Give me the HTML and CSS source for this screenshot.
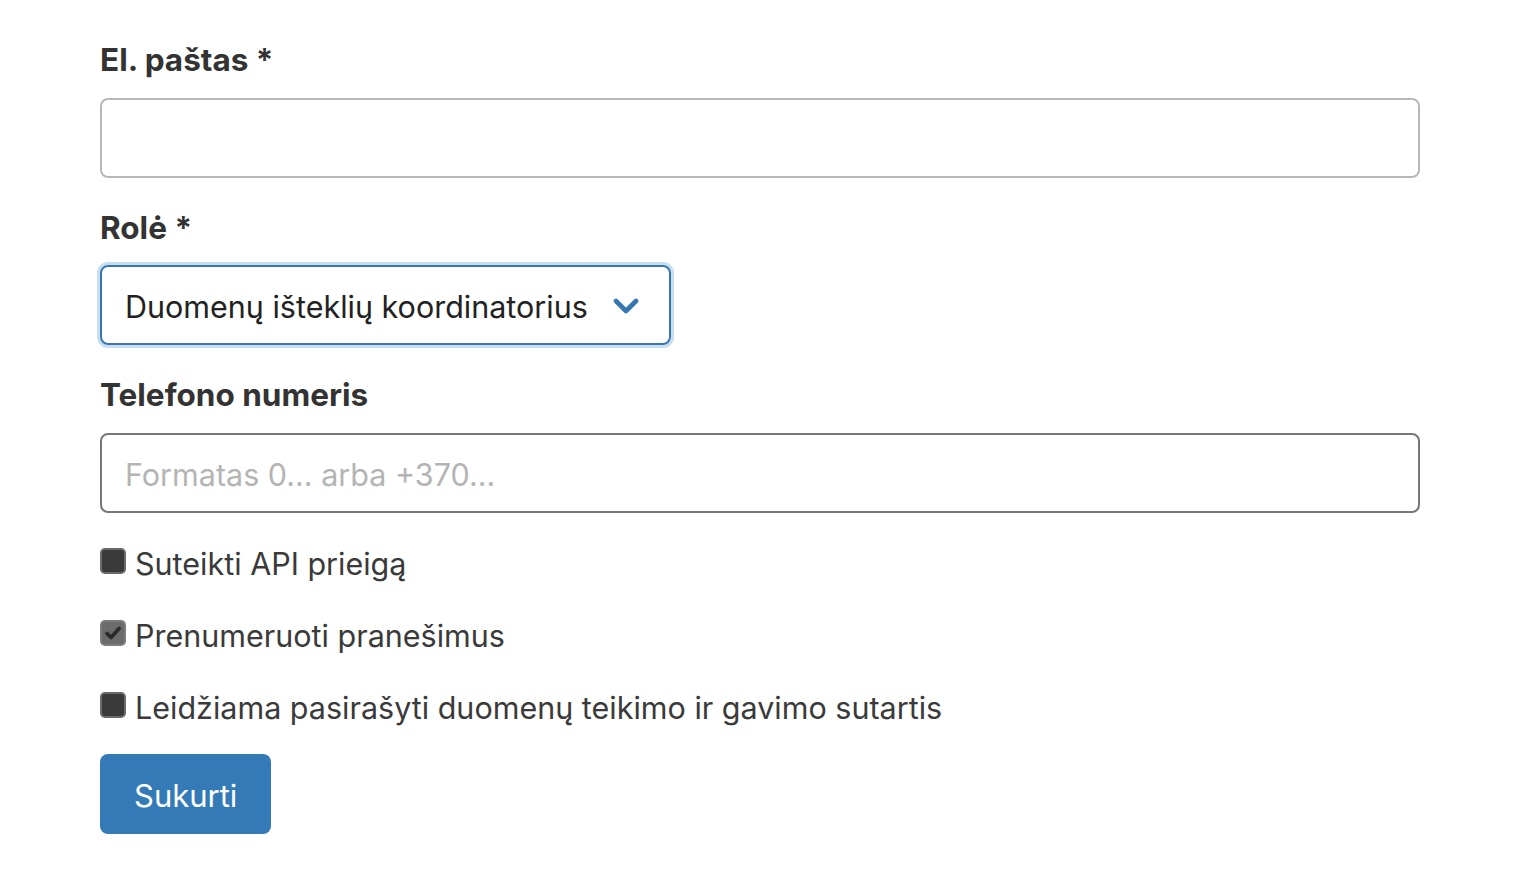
FILE: index.html
```html
<!DOCTYPE html>
<html lang="lt">
<head>
<meta charset="utf-8">
<title>Forma</title>
<link rel="stylesheet" href="styles.css">
</head>
<body>
<form class="form">
  <div class="group">
    <label class="label">El. paštas *</label>
    <div class="input"></div>
  </div>
  <div class="group">
    <label class="label">Rolė *</label>
    <div class="select">
      <span class="select-text">Duomenų išteklių koordinatorius</span>
      <svg class="chevron" width="26" height="18" viewBox="0 0 26 18"><path d="M3 4 L13 14 L23 4" fill="none" stroke="#3677b3" stroke-width="4.6" stroke-linecap="round" stroke-linejoin="round"/></svg>
    </div>
  </div>
  <div class="group">
    <label class="label">Telefono numeris</label>
    <div class="input input-dark"><span class="placeholder">Formatas 0... arba +370...</span></div>
  </div>
  <div class="checks">
    <div class="check"><span class="box"></span><span class="check-text">Suteikti API prieigą</span></div>
    <div class="check"><span class="box box-on"><svg width="20" height="20" viewBox="0 0 20 20"><path d="M4 10.5 L8 14.5 L16 5.5" fill="none" stroke="#2a2a2a" stroke-width="3.8" stroke-linecap="round" stroke-linejoin="round"/></svg></span><span class="check-text">Prenumeruoti pranešimus</span></div>
    <div class="check"><span class="box"></span><span class="check-text">Leidžiama pasirašyti duomenų teikimo ir gavimo sutartis</span></div>
  </div>
  <button type="button" class="btn">Sukurti</button>
</form>
</body>
</html>
```

FILE: styles.css
```css
html, body {
  margin: 0;
  padding: 0;
  background: #ffffff;
}
body {
  font-family: Inter, "Noto Sans", "Liberation Sans", sans-serif;
  color: #333333;
}
.form {
  width: 1320px;
  padding: 40px 0 0 100px;
  display: flex;
  flex-direction: column;
  align-items: flex-start;
}
.group {
  display: flex;
  flex-direction: column;
  align-items: flex-start;
  width: 100%;
  margin-bottom: 30px;
}
.group:nth-child(3) {
  margin-bottom: 29px;
}
.label {
  font-size: 31.5px;
  font-weight: 700;
  line-height: 40px;
  height: 40px;
  margin-bottom: 18px;
  color: #333333;
}
.group:nth-child(2) .label {
  margin-bottom: 17px;
}
.input {
  box-sizing: border-box;
  width: 1320px;
  height: 80px;
  border: 2px solid #b8b8b8;
  border-radius: 8px;
  display: flex;
  align-items: center;
  padding-left: 23px;
  padding-top: 2px;
}
.input-dark {
  border-color: #777777;
}
.placeholder {
  font-size: 30.5px;
  color: #b4b4b4;
}
.select {
  box-sizing: border-box;
  width: 571px;
  height: 80px;
  border: 2px solid #3677b3;
  border-radius: 8px;
  box-shadow: 0 0 0 3px #c8ddee;
  display: flex;
  align-items: center;
  padding-left: 23px;
  padding-right: 30px;
  padding-top: 2px;
  justify-content: space-between;
}
.select-text {
  font-size: 30.5px;
  color: #222222;
}
.chevron {
  display: block;
}
.checks {
  display: flex;
  flex-direction: column;
  gap: 32px;
  margin-bottom: 28px;
}
.check {
  display: flex;
  align-items: center;
  height: 40px;
}
.box {
  box-sizing: border-box;
  width: 26px;
  height: 26px;
  border-radius: 5px;
  background: #3a3a3a;
  border: 2px solid #6a6a6a;
  margin-right: 9px;
  margin-top: -2px;
  display: flex;
  align-items: center;
  justify-content: center;
}
.box-on {
  background: #6b6b6b;
  border-color: #7c7c7c;
}
.box-on svg {
  display: block;
}
.check-text {
  font-size: 30.5px;
  color: #3a3a3a;
  line-height: 40px;
  padding-top: 3px;
}
.btn {
  box-sizing: border-box;
  height: 80px;
  padding: 2px 34px 0;
  background: #337ab7;
  border: none;
  border-radius: 8px;
  color: #ffffff;
  font-family: Inter, "Noto Sans", "Liberation Sans", sans-serif;
  font-size: 31px;
  font-weight: 400;
  cursor: pointer;
}
```
